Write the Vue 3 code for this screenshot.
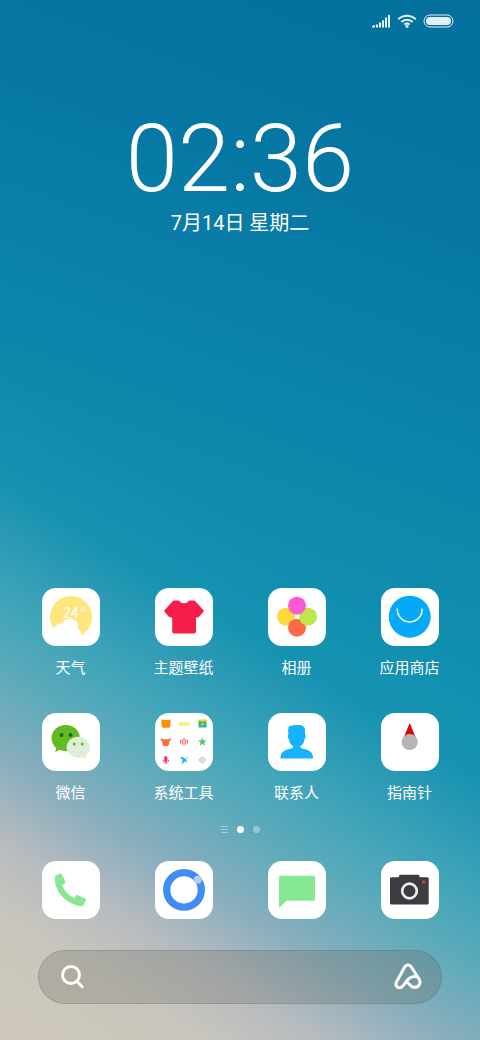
<template>
  <div class="home">
    <header class="status">
      <svg class="status-signal" viewBox="0 0 20 14" aria-label="信号">
        <path d="M1 13.500v-1.500l3-1v2.500zM5 10.500h2v3h-2zM8 8.500h2v5h-2zM11 6.200h2v7.300h-2zM14 3.500h2v10h-2zM17 1h2v12.500h-2z" />
      </svg>
      <svg class="status-wifi" viewBox="0 0 20 14" aria-label="无线网络">
        <path d="M1.300 5.200a12.500 12.500 0 0 1 17.400 0M4.300 8a8.200 8.200 0 0 1 11.400 0M7.200 10.600a4.200 4.200 0 0 1 5.600 0" />
        <circle cx="10" cy="12.300" r="1.500" />
      </svg>
      <svg class="status-battery" viewBox="0 0 31 14" aria-label="电量">
        <rect x="1" y="1" width="29" height="12" rx="6" />
        <rect class="level" x="3" y="3" width="25" height="8" rx="4" />
      </svg>
    </header>

    <section class="clock">
      <time class="clock-time">02:36</time>
      <p class="clock-date">7月14日 星期二</p>
    </section>

    <main class="apps">
      <button v-for="app in apps" :key="app.name" class="app" type="button">
        <svg class="app-icon" viewBox="0 0 58 58" aria-hidden="true" v-html="app.art"></svg>
        <span class="app-name">{{ app.name }}</span>
      </button>
    </main>

    <nav class="pages" aria-label="桌面页">
      <button class="page-list" type="button" aria-label="负一屏"><i></i><i></i><i></i></button>
      <button
        v-for="n in 2"
        :key="n"
        type="button"
        :class="['page-dot', page === n ? 'active' : '']"
        :aria-label="'第' + n + '页'"
        @click="page = n"
      ></button>
    </nav>

    <footer class="dock">
      <button v-for="app in dock" :key="app.name" class="app" type="button" :aria-label="app.name">
        <svg class="app-icon" viewBox="0 0 58 58" aria-hidden="true" v-html="app.art"></svg>
      </button>
    </footer>

    <form class="search" @submit.prevent>
      <button class="search-button" type="submit" aria-label="搜索">
        <svg viewBox="0 0 28 28">
          <circle cx="13" cy="12" r="8.500" />
          <path d="M19 18.500l5.200 5.200" />
        </svg>
      </button>
      <input v-model="query" class="search-input" type="text" aria-label="搜索内容" />
      <button class="search-button" type="button" aria-label="语音助手">
        <svg viewBox="0 0 28 28">
          <path d="M13 19L17 23c3 2.300 7 1.500 8.500-1.500 1-2 .6-3.500-.5-5.500L17.500 4.300c-1.700-3-5.300-3-7 0L2.500 19c-1.500 3 .2 5.800 3 5.800 2.500 0 4-2.300 6-5.300 2.500-4 6-6.300 10-6 1.500.1 2.500.6 3 1.500" />
        </svg>
      </button>
    </form>
  </div>
</template>

<script setup>
import { ref } from 'vue'

const page = ref(1)
const query = ref('')

const apps = [
  {
    name: '天气',
    art: `
      <circle cx="29" cy="29" r="21" fill="#fee57c"/>
      <path d="M6 52V42l7-3c1.500-3 5-4.500 7.500-3.500 2-5.500 9-6.500 13-3 2.500 2.300 3 5 2 7.500 3 2 4.500 5 3 8l-2 6z" fill="#fff"/>
      <text x="21" y="30" font-family="Roboto, sans-serif" font-size="14" fill="#fff">24</text>
      <circle cx="41.300" cy="21.500" r="1.900" fill="none" stroke="#fff" stroke-width="1"/>`
  },
  {
    name: '主题壁纸',
    art: `
      <path d="M19.500 12.500h4c1 0 2 2.800 5.500 2.800s4.500-2.800 5.500-2.800h4c1 0 1.700.4 2.300 1.200l7.500 8.300c.6.700.6 1.300 0 2l-4 4.500c-.8.800-1.500 1.200-3.300 1.200V43.500a2 2 0 0 1-2 2H19.200a2 2 0 0 1-2-2V29.700c-1.800 0-2.700-.4-3.500-1.200l-4-4.500c-.6-.7-.6-1.300 0-2l7.500-8.300c.6-.8 1.300-1.200 2.300-1.200z" fill="#f61d4b"/>`
  },
  {
    name: '相册',
    art: `
      <circle cx="18" cy="28.700" r="9" fill="#fdd83f"/>
      <circle cx="29" cy="39.700" r="9" fill="#fd6a4a"/>
      <circle cx="40" cy="28.700" r="9" fill="#bfe74a"/>
      <circle cx="29" cy="17.700" r="9" fill="#fc58d3"/>
      <circle cx="29" cy="28.700" r="2" fill="#fff"/>`
  },
  {
    name: '应用商店',
    art: `
      <circle cx="28.700" cy="28.700" r="21" fill="#06a9f5"/>
      <path d="M16.300 20.500v1a12.400 12.400 0 0 0 24.800 0v-1" fill="none" stroke="#fff" stroke-width="1.500"/>`
  },
  {
    name: '微信',
    art: `
      <path d="M23.700 12c-8 0-14.200 5.800-14.200 13 0 4 2 7.500 4.500 10l-.7 4 4.200-2.200c2 .9 4 1.400 6.200 1.400 8 0 14.200-5.900 14.200-13.200S31.700 12 23.700 12z" fill="#62bb20"/>
      <circle cx="19.500" cy="22" r="2" fill="#176b25"/>
      <circle cx="28.500" cy="22" r="2" fill="#176b25"/>
      <path d="M36.300 23.800c-6.500 0-11.700 4.700-11.700 10.500s5.200 10.500 11.700 10.500c1.800 0 3.200-.2 4.700-.8l3.600 2-.6-3.500c2.400-2 4-5 4-8.200 0-5.800-5.200-10.500-11.700-10.500z" fill="#dfeed9"/>
      <circle cx="32.200" cy="31" r="1.500" fill="#62bb20"/>
      <circle cx="40.200" cy="31" r="1.500" fill="#62bb20"/>`
  },
  {
    name: '系统工具',
    art: `
      <path d="M6.500 6.200l2 .8h5l2-.8v7.300l-1.500 1.300H8l-1.500-1.300z" fill="#ff9000"/>
      <text x="24" y="12.800" font-family="Roboto, sans-serif" font-size="5" font-weight="700" fill="#f7df25">MIUI</text>
      <path d="M43.500 7h8v7.500h-8z" fill="#3bb878"/>
      <path d="M43.500 6.500h8v2h-8z" fill="#f5d12c"/>
      <path d="M46.500 10.500h2v1.500h-2z" fill="#d9f3e3"/>
      <path d="M6 25l2.300 1.200h5L15.500 25l.5 2-1.500 1-.5 4-1.500 1H9l-1.500-1-.5-4-1.500-1z" fill="#fd703a"/>
      <path d="M25.500 27v3.500M27.200 26v5.500M29 25v7.500M30.800 26v5.500M32.500 27v3.500" stroke="#e8705f" stroke-width="1"/>
      <path d="M47.300 24.500l1.200 2.800 3 .2-2.300 2 .8 3-2.700-1.600-2.600 1.600.8-3-2.300-2 3-.2z" fill="#55c86c"/>
      <rect x="9.300" y="43" width="3" height="6" rx="1.500" fill="#fa2457"/>
      <path d="M8 47c0 4 5.600 4 5.600 0M10.800 50v1" fill="none" stroke="#fa2457" stroke-width=".8"/>
      <path d="M26 44l2.500.5L30 46l2.300-2 .3.500-1.800 2.300 1.500 2.200-.5.500-2-1.300-1.600 1.500v1.300l-.7.300-.3-2-.9-.3 1.800-2-2.600-1.700z" fill="#1bb4e8"/>
      <path d="M47.300 44l3.200 3-3.200 3-3.200-3z" fill="#e0ebe5" stroke="#9aa9a2" stroke-width=".8"/>`
  },
  {
    name: '联系人',
    art: `
      <path d="M20.800 13.500c2.500-1 5.500-1.500 8.700-1.500 5.500 0 7.500 1.500 7.500 5v4c1 .5.800 4.500-.4 5-.3 3.500-2.100 6-4.100 7v1.500c2 1.500 5 1.500 8.100 3 3.500 1.600 4.400 4.300 4.400 7.900H12.500c0-3.600.9-6.300 4.400-7.900 3.100-1.500 6.100-1.500 8.100-3V33c-2-1-3.800-3.500-4.100-7-1.200-.5-1.400-4.500-.4-5-.5-2.500-.5-5 .3-7.500z" fill="#16b2fb"/>`
  },
  {
    name: '指南针',
    art: `
      <path d="M28.700 10l5.600 13.500H23.100z" fill="#df0505"/>
      <circle cx="28.700" cy="29" r="8" fill="#b5b5b5"/>`
  }
]

const dock = [
  {
    name: '电话',
    art: `
      <path d="M13.500 14.800l4.300-2.200c1-.4 1.700-.1 2.100.9l3.200 6.800c.4 1 .2 1.600-.6 2.200l-2.500 2c2.500 5.500 6.800 10 12.300 12.700l1.700-2.400c.6-.8 1.200-1 2.200-.5l6.800 3.300c1 .4 1.200 1.100.7 2.100L41.500 44c-.5.900-1.300 1.500-2.500 1.300C24.500 43.200 12.500 31 12.700 16.500c0-.8.200-1.400.8-1.700z" fill="#86e893"/>`
  },
  {
    name: '浏览器',
    art: `
      <circle cx="29" cy="28.900" r="17.300" fill="none" stroke="#3f8cf2" stroke-width="7.300"/>
      <circle cx="42.700" cy="18.700" r="4" fill="#b8cff0"/>`
  },
  {
    name: '短信',
    art: `
      <path d="M12.500 14.700h33a1.500 1.500 0 0 1 1.500 1.500v22a1.500 1.500 0 0 1-1.500 1.500H18.500l-6.500 6.500c-.6.600-1 .4-1-.5V16.200a1.500 1.500 0 0 1 1.500-1.500z" fill="#86e893"/>`
  },
  {
    name: '相机',
    art: `
      <path d="M18 16.300v-1.500l1-1h18.500l1 1v1.500h8.200l1 1v25.200l-1 1H10l-1-1V17.300l1-1z" fill="#3c3b41"/>
      <circle cx="28.500" cy="30" r="7.300" fill="none" stroke="#ececec" stroke-width="2.700"/>
      <circle cx="42.700" cy="21" r="1.700" fill="#e23a3a"/>`
  }
]
</script>

<style>
body {
  margin: 0;
}
</style>

<style scoped>
.home {
  display: flex;
  flex-direction: column;
  box-sizing: border-box;
  min-height: 100vh;
  padding-bottom: 36px;
  color: #fff;
  font-family: Roboto, "Noto Sans CJK SC", sans-serif;
  background:
    linear-gradient(212deg, rgba(18, 144, 176, 0) 50%, rgba(24, 147, 177, .7) 58%, #2a99b4 62%, #40a4b9 67%, #5aaaba 72%, #8aaebd 79%, #b7bbbf 85%, #c9c6bd 91%, #cfc8bb 100%),
    linear-gradient(200deg, #03709d 0%, #0676a3 18%, #0a80a9 33%, #0f88ad 45%, #1192b1 60%);
}

button {
  border: 0;
  padding: 0;
  background: none;
  color: inherit;
  font: inherit;
  cursor: pointer;
}

svg {
  display: block;
}

.status {
  display: flex;
  align-items: center;
  justify-content: flex-end;
  gap: 6px;
  height: 42px;
  padding-right: 26px;
  fill: #e4f1f7;
}
.status-signal,
.status-wifi {
  width: 20px;
  height: 14px;
}
.status-wifi path {
  fill: none;
  stroke: #e4f1f7;
  stroke-width: 2;
}
.status-battery {
  width: 31px;
  height: 14px;
}
.status-battery rect {
  fill: none;
  stroke: #e4f1f7;
  stroke-width: 1;
}
.status-battery .level {
  fill: #e4f1f7;
  stroke: none;
}

.clock {
  display: flex;
  flex-direction: column;
  align-items: center;
  margin-top: 69px;
}
.clock-time {
  font-size: 94px;
  font-weight: 300;
  line-height: 96px;
}
.clock-date {
  margin: 2px 0 0;
  font-size: 20px;
  line-height: 28px;
}

.apps,
.dock {
  display: grid;
  grid-template-columns: repeat(4, 1fr);
  padding: 0 14px;
}
.apps {
  row-gap: 35px;
  margin-top: auto;
}
.app {
  display: flex;
  flex-direction: column;
  align-items: center;
  gap: 12px;
}
.app-icon {
  width: 58px;
  height: 58px;
  border-radius: 14px;
  background: #fff;
}
.app-name {
  font-size: 15px;
  line-height: 20px;
  white-space: nowrap;
}

.pages {
  display: flex;
  align-items: center;
  justify-content: center;
  gap: 9px;
  margin: 23px 0 28px;
}
.page-list {
  display: flex;
  flex-direction: column;
  gap: 2px;
  width: 7px;
}
.page-list i {
  height: 1px;
  background: rgba(255, 255, 255, .4);
}
.page-dot {
  width: 7px;
  height: 7px;
  border-radius: 50%;
  background: rgba(255, 255, 255, .35);
}
.page-dot.active {
  background: #fff;
}

.search {
  display: flex;
  align-items: center;
  box-sizing: border-box;
  height: 54px;
  margin: 31px 38px 0;
  padding: 0 19px;
  border: 1px solid rgba(60, 80, 80, .18);
  border-radius: 27px;
  background: rgba(100, 100, 90, .26);
}
.search-button svg {
  width: 28px;
  height: 28px;
  fill: none;
  stroke: #fff;
  stroke-width: 3;
  stroke-linecap: round;
  stroke-linejoin: round;
}
.search-input {
  flex: 1;
  min-width: 0;
  border: 0;
  outline: 0;
  background: none;
  color: #fff;
  font: inherit;
  font-size: 15px;
}
</style>
